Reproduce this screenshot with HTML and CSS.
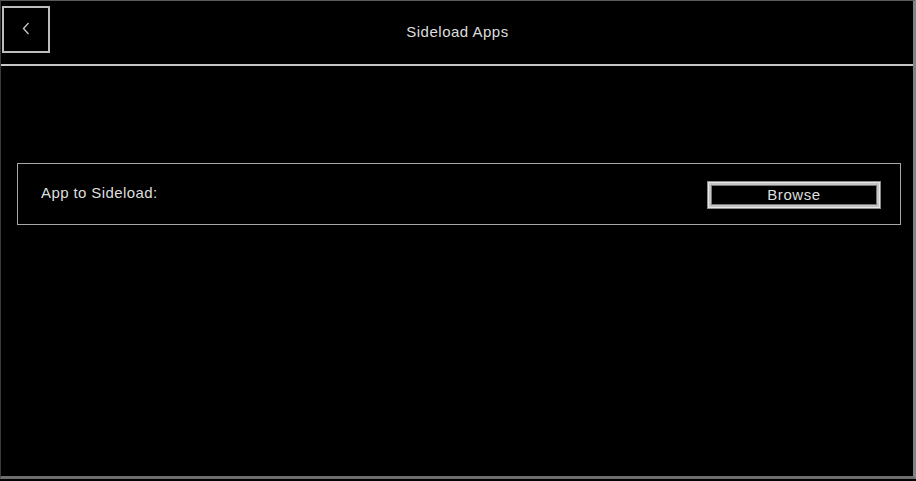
FILE: index.html
```html
<!DOCTYPE html>
<html>
<head>
<meta charset="utf-8">
<link rel="stylesheet" href="styles.css">
</head>
<body>
<div class="window">
  <header class="header">
    <button class="back" aria-label="Back">
      <svg width="8" height="13" viewBox="0 0 8 13"><path d="M6.5 1 L1.5 6.5 L6.5 12" fill="none" stroke="#c8c8c8" stroke-width="1.3"/></svg>
    </button>
    <div class="title">Sideload Apps</div>
  </header>
  <main class="content">
    <section class="panel">
      <span class="label">App to Sideload:</span>
      <button class="browse">Browse</button>
    </section>
  </main>
</div>
</body>
</html>
```

FILE: styles.css
```css
html, body {
  margin: 0;
  padding: 0;
  background: #000;
}
body {
  font-family: "Liberation Sans", Arial, sans-serif;
  font-size: 15px;
  color: #dedede;
}
.window {
  box-sizing: border-box;
  width: 916px;
  height: 479px;
  background: #000;
  border-top: 1px solid #5a5a5a;
  border-left: 1px solid #3a3a3a;
  border-right: 3px solid #7d8585;
  border-bottom: 3px solid #6e6e6e;
  display: flex;
  flex-direction: column;
}
.header {
  position: relative;
  height: 63px;
  border-bottom: 2px solid #c6c6c6;
  display: flex;
  align-items: flex-start;
}
.back {
  margin: 5px 0 0 1px;
  width: 48px;
  height: 47px;
  box-sizing: border-box;
  border: 2px solid #bdbdbd;
  background: #000;
  padding: 0 0 2px 0;
  display: flex;
  align-items: center;
  justify-content: center;
  cursor: pointer;
}
.back svg { display: block; }
.title {
  flex: 1;
  text-align: center;
  margin-top: 22px;
  margin-right: 48px;
  line-height: 18px;
  letter-spacing: 0.5px;
}
.content {
  flex: 1;
  padding: 97px 12px 0 16px;
}
.panel {
  box-sizing: border-box;
  height: 62px;
  border: 1px solid #a8a8a8;
  display: flex;
  align-items: center;
  justify-content: space-between;
  padding: 0 19px 0 23px;
}
.label {
  line-height: 18px;
  margin-top: -3px;
  letter-spacing: 0.4px;
}
.browse {
  box-sizing: border-box;
  width: 174px;
  height: 28px;
  margin-top: 1px;
  background: #000;
  color: #dedede;
  font-family: inherit;
  font-size: 15px;
  letter-spacing: 0.6px;
  border: 1px solid #8a8a8a;
  box-shadow: inset 0 0 0 1px #e6e6e6, inset 0 0 0 3px #c4c4c4, inset 0 0 0 4px #777;
  padding: 0;
  line-height: 22px;
  cursor: pointer;
}
```
